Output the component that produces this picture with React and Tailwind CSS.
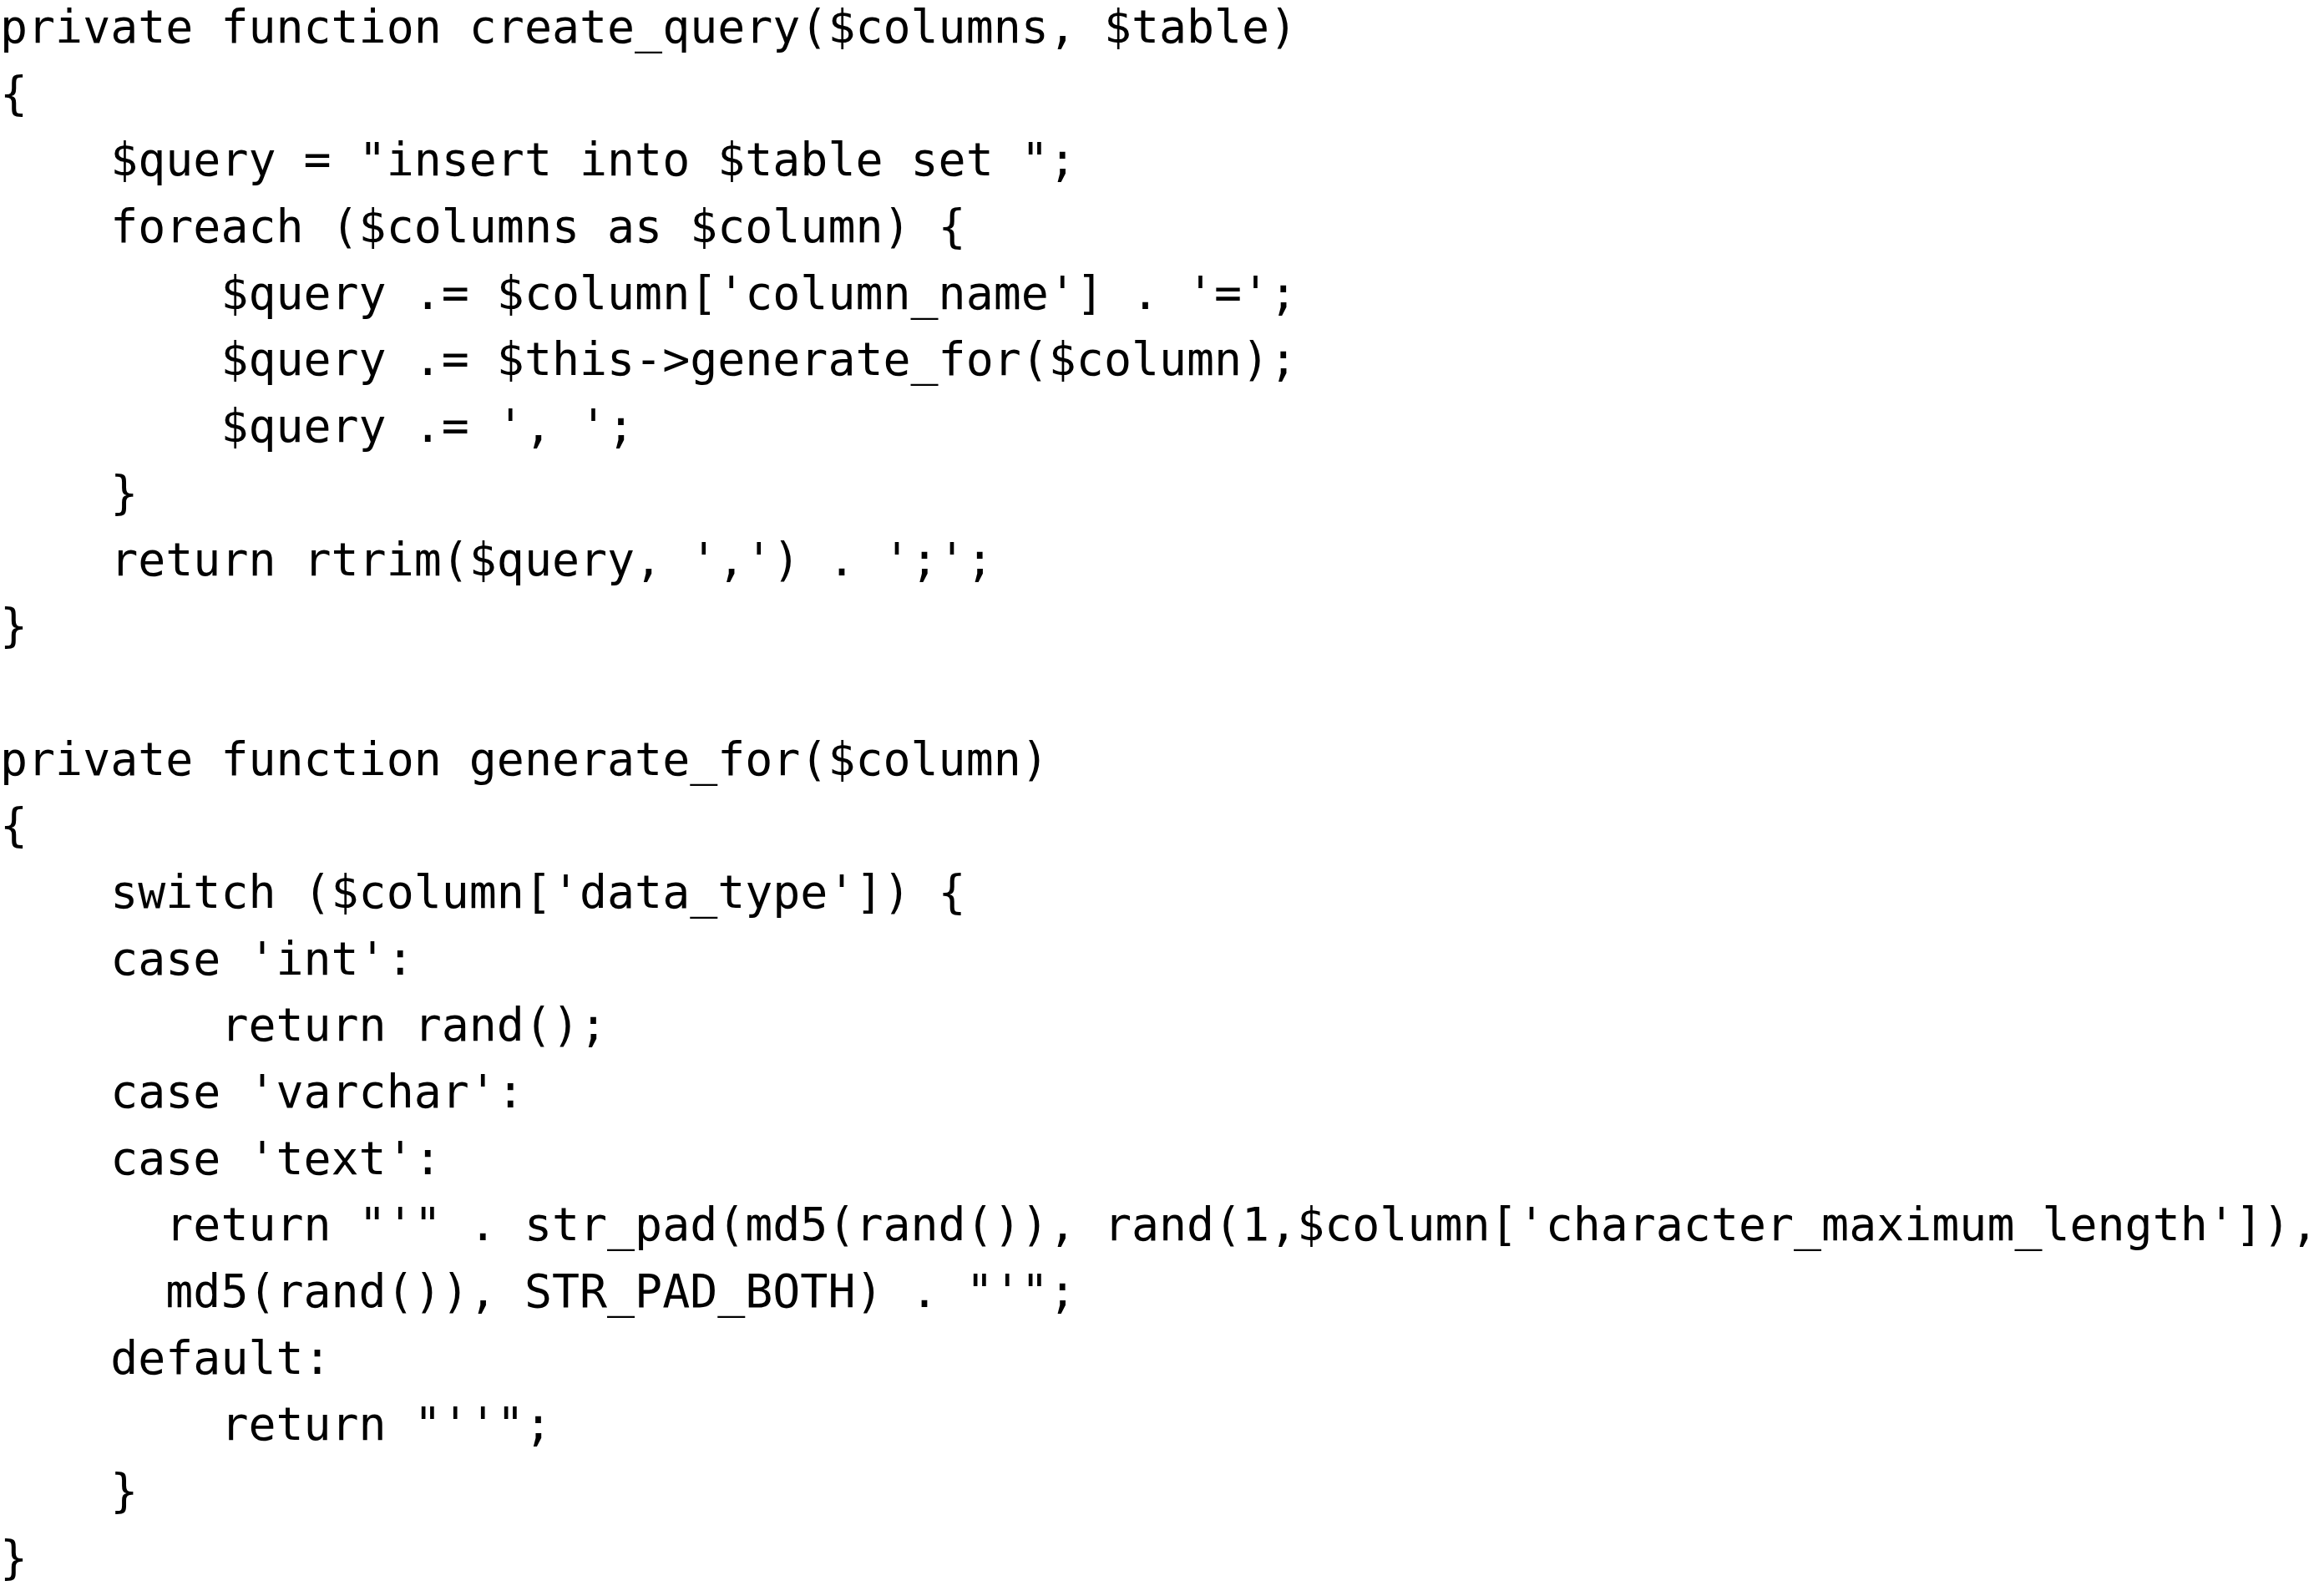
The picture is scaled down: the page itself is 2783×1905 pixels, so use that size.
import React from 'react';

const lines = [
  "private function create_query($columns, $table)",
  "{",
  "    $query = \"insert into $table set \";",
  "    foreach ($columns as $column) {",
  "        $query .= $column['column_name'] . '=';",
  "        $query .= $this->generate_for($column);",
  "        $query .= ', ';",
  "    }",
  "    return rtrim($query, ',') . ';';",
  "}",
  "",
  "private function generate_for($column)",
  "{",
  "    switch ($column['data_type']) {",
  "    case 'int':",
  "        return rand();",
  "    case 'varchar':",
  "    case 'text':",
  "      return \"'\" . str_pad(md5(rand()), rand(1,$column['character_maximum_length']),",
  "      md5(rand()), STR_PAD_BOTH) . \"'\";",
  "    default:",
  "        return \"''\";",
  "    }",
  "}",
];

const App = () => {
  return (
    <div className="w-[2783px] h-[1905px] bg-white overflow-hidden text-black">
      <pre className="m-0 -mt-[7px] font-['DejaVu_Sans_Mono',monospace] text-[54.9px] leading-[79.7px]">
        {lines.map((line, i) => (
          <div key={i} className="whitespace-pre h-[79.7px]">
            {line || ' '}
          </div>
        ))}
      </pre>
    </div>
  );
};

export default App;
